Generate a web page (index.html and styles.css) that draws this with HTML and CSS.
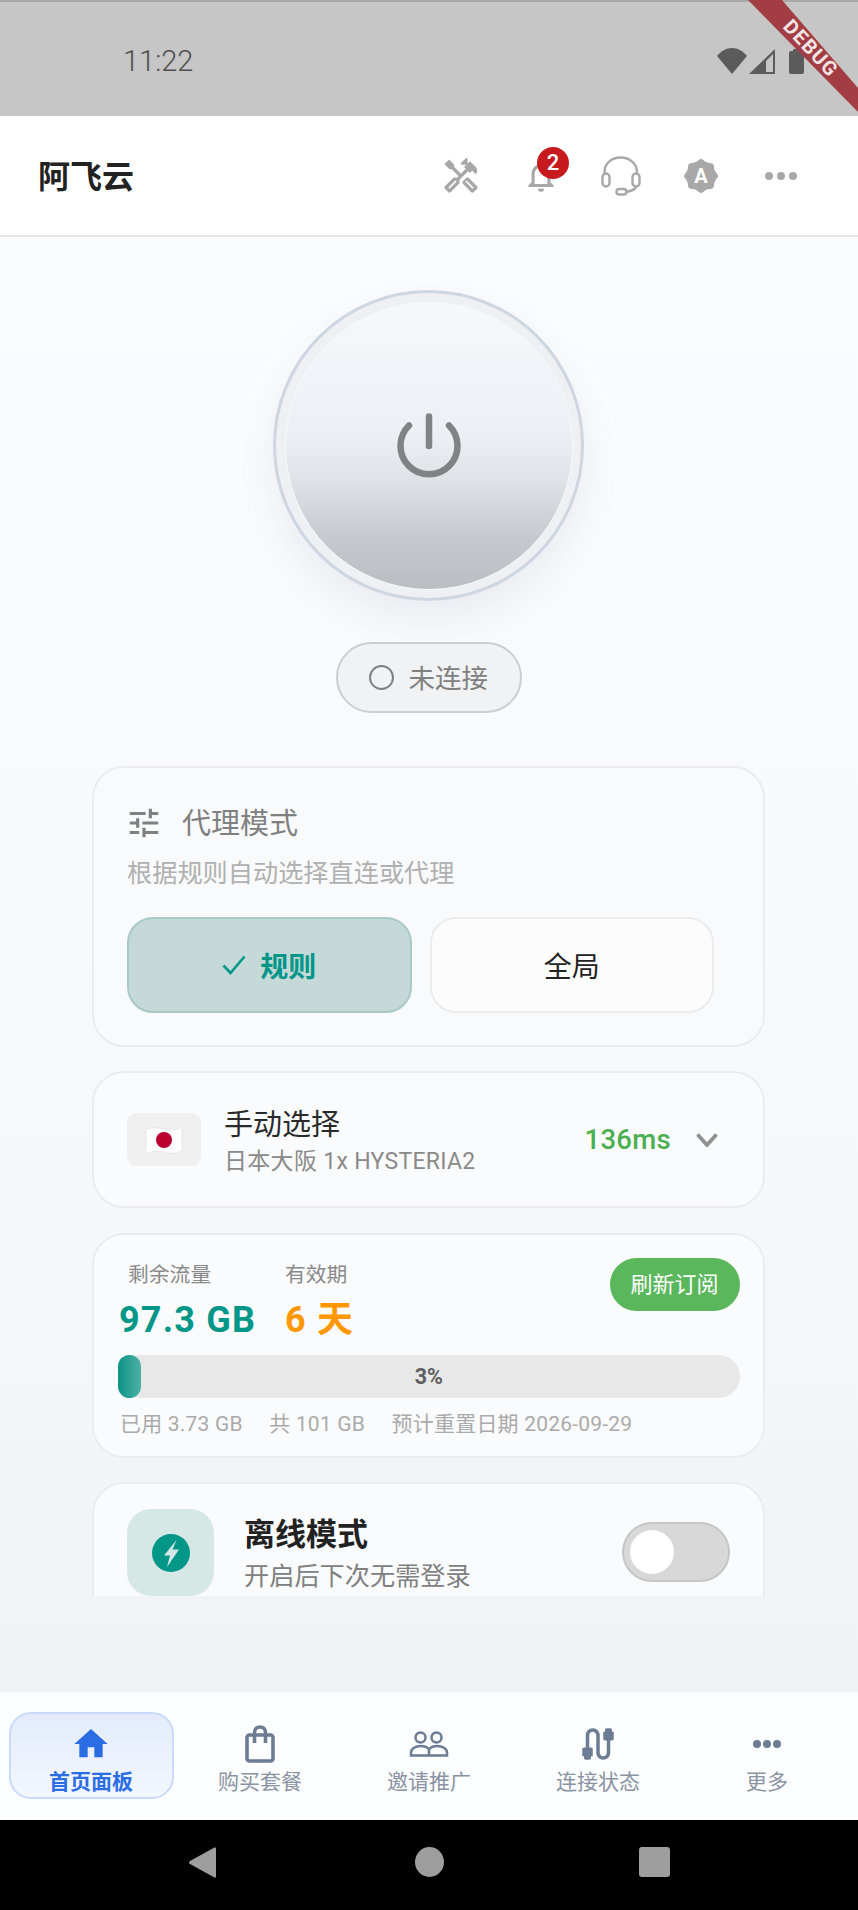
FILE: index.html

```html
<!DOCTYPE html>
<html lang="zh">
<head>
  <meta charset="UTF-8">
  <meta name="viewport" content="width=device-width, initial-scale=1.0">
  <title>阿飞云</title>
  <link rel="stylesheet" href="styles.css">
</head>
<body>
  <div class="phone">
    <div class="status-bar">
      <span class="status-time">11:22</span>
      <div class="status-icons">
        <svg class="st-wifi" viewBox="0 0 30 26"><path d="M0 8C4 3 9 0 15 0s11 3 15 8L15 26z"/></svg>
        <svg class="st-signal" viewBox="0 0 26 25"><path d="M26 0v25H0zM24 5L17 12v11h7z"/></svg>
        <svg class="st-battery" viewBox="0 0 15 25"><path d="M4 2V1q0-1 1-1h5q1 0 1 1v1h2q2 0 2 2v19q0 2-2 2H2q-2 0-2-2V4q0-2 2-2z"/></svg>
      </div>
    </div>

    <header class="app-bar">
      <h1 class="app-title">阿飞云</h1>
      <div class="app-actions">
        <div class="action">
          <svg class="ic-tools" viewBox="0 0 24 24"><path d="M21.67 18.17l-5.3-5.3h-.99l-2.54 2.54v.99l5.3 5.3c.39.39 1.02.39 1.41 0l2.12-2.12c.39-.38.39-1.02 0-1.41zm-2.83 1.42l-4.24-4.24.71-.71 4.24 4.24-.71.71z"/><path d="M17.34 10.19l1.41-1.41 2.12 2.12c1.17-1.17 1.17-3.07 0-4.24l-3.54-3.54-1.41 1.41V1.71l-.7-.71-3.54 3.54.71.71h2.83l-1.41 1.41 1.06 1.06-2.89 2.89-4.13-4.13V5.06L4.83 2.04 2 4.87 5.03 7.9h1.41l4.13 4.13-.85.85H7.6l-5.3 5.3c-.39.39-.39 1.02 0 1.41l2.12 2.12c.39.39 1.02.39 1.41 0l5.3-5.3v-2.12l5.15-5.15 1.06 1.05zm-7.98 5.15l-4.24 4.24-.71-.71 4.24-4.24.71.71z"/></svg>
        </div>
        <div class="action action-bell">
          <svg class="ic-bell" viewBox="0 0 24 24"><path d="M12 22c1.1 0 2-.9 2-2h-4c0 1.1.9 2 2 2zm6-6v-5c0-3.07-1.63-5.64-4.5-6.32V4c0-.83-.67-1.5-1.5-1.5s-1.5.67-1.5 1.5v.68C7.64 5.36 6 7.92 6 11v5l-2 2v1h16v-1l-2-2zm-2 1H8v-6c0-2.48 1.51-4.5 4-4.5s4 2.02 4 4.5v6z"/></svg>
          <span class="bell-badge">2</span>
        </div>
        <div class="action">
          <svg class="ic-headset" viewBox="0 0 40 40" fill="none" stroke="#a8a8a8" stroke-width="2.4" stroke-linecap="round"><path d="M3.5 18V16C3.500 7.500 10.500 1.500 19.500 1.500S36 7.500 36 16v2"/><rect x="1.500" y="17.500" width="7" height="13" rx="3.500"/><rect x="31.500" y="17.500" width="7" height="13" rx="3.500"/><path d="M35 31c-1 3-5 4-10 5"/><rect x="15.500" y="33" width="10" height="5.500" rx="2.750"/></svg>
        </div>
        <div class="action">
          <svg class="ic-auto" viewBox="0 0 36 36"><rect x="5" y="5" width="26" height="26" rx="4" fill="#a8a8a8"/><rect x="5" y="5" width="26" height="26" rx="4" fill="#a8a8a8" transform="rotate(45 18 18)"/><circle cx="18" cy="18" r="15" fill="#a8a8a8"/><text x="18" y="25" text-anchor="middle" class="auto-letter">A</text></svg>
        </div>
        <div class="action">
          <svg class="ic-dots" viewBox="0 0 32 8" fill="#a8a8a8"><circle cx="4" cy="4" r="4"/><circle cx="16" cy="4" r="4"/><circle cx="28" cy="4" r="4"/></svg>
        </div>
      </div>
    </header>

    <main class="main">
      <div class="scroll">
        <div class="power-wrap">
          <div class="power-outer">
            <div class="power-inner">
              <svg class="ic-power" viewBox="0 0 66 66" fill="none" stroke="#808284" stroke-width="6.500" stroke-linecap="round"><path d="M13 12.500A28.500 28.500 0 1 0 53 12.500"/><path d="M33 3.500V33"/></svg>
            </div>
          </div>
        </div>

        <div class="conn-wrap">
          <div class="conn-pill">
            <span class="conn-dot"></span>
            <span class="conn-text">未连接</span>
          </div>
        </div>

        <section class="card card-mode">
          <div class="mode-head">
            <svg class="ic-tune" viewBox="0 0 24 24"><path d="M3 17v2h6v-2H3zM3 5v2h10V5H3zm10 16v-2h8v-2h-8v-2h-2v6h2zM7 9v2H3v2h4v2h2V9H7zm14 4v-2H11v2h10zm-6-4h2V7h4V5h-4V3h-2v6z"/></svg>
            <span class="mode-title">代理模式</span>
          </div>
          <p class="mode-desc">根据规则自动选择直连或代理</p>
          <div class="mode-btns">
            <div class="mode-btn active">
              <svg class="ic-check" viewBox="0 0 24 20" fill="none" stroke="#009688" stroke-width="2.600"><path d="M1.500 10.500L8.500 18L22.500 1.500"/></svg>
              <span>规则</span>
            </div>
            <div class="mode-btn">全局</div>
          </div>
        </section>

        <section class="card card-node">
          <div class="flag-box">
            <svg class="ic-flag" viewBox="0 0 38 28"><path d="M1 3q9-3 18 0t18-2v24q-9 4-18 1t-18 2z" fill="#fff" stroke="#e2e2e2" stroke-width=".8"/><circle cx="19" cy="14" r="8" fill="#bc002d"/></svg>
          </div>
          <div class="node-info">
            <div class="node-title">手动选择</div>
            <div class="node-sub">日本大阪 1x HYSTERIA2</div>
          </div>
          <span class="node-ping">136ms</span>
          <svg class="ic-chevron" viewBox="0 0 22 14" fill="none" stroke="#909090" stroke-width="3.800"><path d="M1.500 1.500L11 12L20.500 1.500"/></svg>
        </section>

        <section class="card card-traffic">
          <div class="traffic-top">
            <div class="stat stat-left">
              <div class="stat-label">剩余流量</div>
              <div class="stat-value teal">97.3 GB</div>
            </div>
            <div class="stat">
              <div class="stat-label flush">有效期</div>
              <div class="stat-value orange">6 天</div>
            </div>
            <div class="refresh-btn">刷新订阅</div>
          </div>
          <div class="progress">
            <div class="progress-fill" style="width: 23px"></div>
            <span class="progress-text">3%</span>
          </div>
          <div class="traffic-foot">
            <span>已用 3.73 GB</span>
            <span>共 101 GB</span>
            <span>预计重置日期 2026-09-29</span>
          </div>
        </section>

        <section class="card card-offline">
          <div class="offline-icon">
            <svg class="ic-bolt" viewBox="0 0 38 38"><circle cx="19" cy="19" r="19" fill="#009688"/><path d="M24.500 6L12 21.500H18L15 33L27 15.500H20.500z" fill="#d6e8e6"/></svg>
          </div>
          <div class="offline-info">
            <div class="offline-title">离线模式</div>
            <div class="offline-sub">开启后下次无需登录</div>
          </div>
          <div class="switch"><span class="switch-knob"></span></div>
        </section>
      </div>
    </main>

    <nav class="bottom-nav">
      <div class="tab active">
        <div class="tab-icon"><svg class="ic-home" viewBox="0 0 24 24"><path d="M10 20v-6h4v6h5v-8h3L12 3 2 12h3v8z"/></svg></div>
        <span class="tab-label">首页面板</span>
      </div>
      <div class="tab">
        <div class="tab-icon"><svg class="ic-bag" viewBox="0 0 32 38" fill="none" stroke="#6b7c93" stroke-width="3.600"><rect x="3" y="10" width="26" height="26" rx="2.500"/><path d="M10.500 18V7.500C10.500 4 13 2 16 2s5.500 2 5.500 5.500V18"/></svg></div>
        <span class="tab-label">购买套餐</span>
      </div>
      <div class="tab">
        <div class="tab-icon"><svg class="ic-people" viewBox="0 0 40 26" fill="none" stroke="#6b7c93" stroke-width="2.500"><circle cx="11.500" cy="6.500" r="5"/><circle cx="27.500" cy="6.500" r="5"/><path d="M2 24.500v-3c0-4 5-6.500 9.500-6.500 3.500 0 6.500 1 8.500 3 2-2 5-3 8.500-3 4.500 0 9.500 2.500 9.500 6.500v3z"/><path d="M20 18v6"/></svg></div>
        <span class="tab-label">邀请推广</span>
      </div>
      <div class="tab">
        <div class="tab-icon"><svg class="ic-cable" viewBox="0 0 24 24"><path d="M20 5V4c0-.55-.45-1-1-1h-2c-.55 0-1 .45-1 1v1h-1v4c0 .55.45 1 1 1h1v7c0 1.100-.9 2-2 2s-2-.9-2-2V7c0-2.210-1.790-4-4-4S5 4.790 5 7v7H4c-.55 0-1 .45-1 1v4h1v1c0 .55.45 1 1 1h2c.55 0 1-.45 1-1v-1h1v-4c0-.55-.45-1-1-1H7V7c0-1.100.9-2 2-2s2 .9 2 2v10c0 2.210 1.790 4 4 4s4-1.790 4-4v-7h1c.55 0 1-.45 1-1V5h-1z"/></svg></div>
        <span class="tab-label">连接状态</span>
      </div>
      <div class="tab">
        <div class="tab-icon"><svg class="ic-more" viewBox="0 0 28 8" fill="#6b7c93"><circle cx="4" cy="4" r="4"/><circle cx="14" cy="4" r="4"/><circle cx="24" cy="4" r="4"/></svg></div>
        <span class="tab-label">更多</span>
      </div>
    </nav>

    <div class="sys-nav">
      <svg class="sys-back" viewBox="0 0 27 31"><path d="M27 1.500v28q0 1.500-1.500 1L1 17q-2-1.500 0-3L25.500.5q1.500-.5 1.500 1z"/></svg>
      <span class="sys-home"></span>
      <span class="sys-recent"></span>
    </div>

    <div class="debug-banner"><span class="debug-text">DEBUG</span></div>
  </div>
</body>
</html>
```

FILE: styles.css

```css
* {
  box-sizing: border-box;
}
html, body {
  margin: 0;
  padding: 0;
}
body {
  width: 858px;
  height: 1910px;
  overflow: hidden;
  font-family: Roboto, "Noto Sans CJK SC", sans-serif;
  color: #222;
}
svg {
  display: block;
  flex: none;
}
.phone {
  position: relative;
  display: flex;
  flex-direction: column;
  width: 858px;
  height: 1910px;
  overflow: hidden;
}

/* status bar */
.status-bar {
  display: flex;
  align-items: center;
  justify-content: space-between;
  height: 116px;
  padding: 4px 54px 0 123px;
  background-color: #c6c6c6;
  border-top: 2px solid #a8a8a8;
}
.status-time {
  font-size: 29px;
  font-weight: 300;
  color: #4f4f4f;
}
.status-icons {
  display: flex;
  align-items: center;
  fill: #5b5b5b;
}
.st-wifi {
  width: 30px;
  height: 26px;
}
.st-signal {
  width: 26px;
  height: 25px;
  margin-left: 2px;
}
.st-battery {
  width: 15px;
  height: 25px;
  margin-left: 14px;
}

/* app bar */
.app-bar {
  display: flex;
  align-items: center;
  justify-content: space-between;
  height: 121px;
  padding: 0 37px 0 38px;
  background-color: #fff;
  border-bottom: 2px solid #e6e6e6;
}
.app-title {
  margin: 3px 0 0;
  font-size: 32px;
  font-weight: 700;
  line-height: 40px;
  color: #222;
}
.app-actions {
  display: flex;
  align-items: center;
}
.action {
  position: relative;
  display: flex;
  justify-content: center;
  width: 80px;
  fill: #a8a8a8;
}
.ic-tools {
  width: 40px;
  height: 40px;
}
.ic-bell {
  width: 38px;
  height: 38px;
}
.bell-badge {
  position: absolute;
  top: -10px;
  left: 36px;
  width: 32px;
  height: 32px;
  border-radius: 50%;
  background-color: #c61a1f;
  color: #fff;
  font-size: 22px;
  font-weight: 500;
  line-height: 32px;
  text-align: center;
}
.ic-headset {
  width: 40px;
  height: 40px;
}
.ic-auto {
  width: 36px;
  height: 36px;
}
.auto-letter {
  font-family: Roboto, sans-serif;
  font-size: 20px;
  font-weight: 700;
  fill: #fff;
}
.ic-dots {
  width: 32px;
  height: 8px;
}

/* main area */
.main {
  flex: 1;
  background: linear-gradient(180deg, #fbfcfe 0%, #f6f8fb 60%, #f0f3f6 100%);
}
.scroll {
  height: 1359px;
  padding: 53px 93px 0 92px;
  overflow: hidden;
}
.power-wrap {
  display: flex;
  justify-content: center;
}
.power-outer {
  display: flex;
  align-items: center;
  justify-content: center;
  width: 311px;
  height: 311px;
  border: 3px solid #cdd6e2;
  border-radius: 50%;
  background-color: #eef0f3;
  box-shadow: 0 18px 40px rgba(60, 70, 90, 0.08);
}
.power-inner {
  display: flex;
  align-items: center;
  justify-content: center;
  width: 288px;
  height: 288px;
  border: 1.500px solid #f8f9fb;
  border-radius: 50%;
  background: linear-gradient(180deg, #f6f8fa 0%, #ecf0f5 46%, #dfe3e8 62%, #c6cacf 82%, #babec3 100%);
}
.ic-power {
  width: 66px;
  height: 66px;
}
.conn-wrap {
  display: flex;
  justify-content: center;
  margin-top: 41px;
}
.conn-pill {
  display: flex;
  align-items: center;
  width: 186px;
  height: 71px;
  padding-left: 31px;
  border: 2px solid #cdcdcd;
  border-radius: 36px;
  background-color: #f1f2f4;
}
.conn-dot {
  width: 25px;
  height: 25px;
  border: 2.500px solid #808080;
  border-radius: 50%;
}
.conn-text {
  margin: 3px 0 0 15px;
  font-size: 26.500px;
  line-height: 36px;
  color: #808080;
}

/* cards */
.card {
  border: 2px solid #ececee;
  border-radius: 32px;
  background-color: #fafbfc;
}
.card-mode {
  margin-top: 53px;
  padding: 37px 49px 32px 33px;
  background-color: #f9fafc;
}
.mode-head {
  display: flex;
  align-items: center;
  height: 36px;
}
.ic-tune {
  width: 38px;
  height: 38px;
  margin-left: -2px;
  fill: #808080;
}
.mode-title {
  margin: 2px 0 0 19px;
  font-size: 29px;
  line-height: 36px;
  color: #808080;
}
.mode-desc {
  margin: 17px 0 0;
  font-size: 25.200px;
  line-height: 32px;
  white-space: nowrap;
  color: #b0b0b0;
}
.mode-btns {
  display: flex;
  gap: 18px;
  margin-top: 27px;
}
.mode-btn {
  display: flex;
  flex: 1;
  align-items: center;
  justify-content: center;
  height: 96px;
  border: 2px solid #ececec;
  border-radius: 26px;
  background-color: #fcfcfc;
  font-size: 28px;
  color: #222;
}
.mode-btn.active {
  gap: 14px;
  border-color: #a9c9c6;
  background-color: #c6d9d9;
  font-weight: 700;
  color: #009688;
}
.ic-check {
  width: 24px;
  height: 20px;
}
.card-node {
  display: flex;
  align-items: center;
  height: 137px;
  margin-top: 24px;
  padding: 0 45px 0 33px;
}
.flag-box {
  display: flex;
  align-items: center;
  justify-content: center;
  width: 73.500px;
  height: 53px;
  border-radius: 9px;
  background-color: #f0f0f0;
}
.ic-flag {
  width: 38px;
  height: 28px;
}
.node-info {
  flex: 1;
  margin-left: 23.500px;
  padding-top: 4px;
}
.node-title {
  font-size: 29px;
  line-height: 36px;
  color: #2a2a2a;
}
.node-sub {
  margin-top: 4px;
  font-size: 23px;
  line-height: 30px;
  letter-spacing: 0.3px;
  color: #8a8a8a;
}
.node-ping {
  font-size: 27.500px;
  font-weight: 500;
  letter-spacing: 0.3px;
  color: #4caf50;
}
.ic-chevron {
  width: 22px;
  height: 14px;
  margin-left: 25px;
}
.card-traffic {
  margin-top: 25px;
  padding: 26px 23.500px 18px 25px;
}
.traffic-top {
  display: flex;
  align-items: flex-start;
}
.stat {
  flex: 1;
}
.stat-left {
  flex: none;
  width: 166px;
}
.stat-label {
  padding-left: 9px;
  font-size: 20.800px;
  line-height: 28px;
  color: #8a8a8a;
}
.stat-label.flush {
  padding-left: 0;
}
.stat-value {
  margin-top: 7px;
  font-size: 36px;
  font-weight: 700;
  line-height: 48px;
  letter-spacing: 1.200px;
  white-space: nowrap;
}
.teal {
  color: #009688;
}
.orange {
  color: #ff9800;
}
.refresh-btn {
  width: 130px;
  height: 53px;
  margin-top: -3px;
  border-radius: 27px;
  background-color: #5ab75c;
  color: #fff;
  font-size: 22px;
  line-height: 53px;
  text-align: center;
}
.progress {
  position: relative;
  height: 43px;
  margin: 11px 0 0 -1px;
  border-radius: 22px;
  background-color: #e8e8e8;
}
.progress-fill {
  height: 43px;
  border-radius: 12px;
  background: linear-gradient(90deg, #0c9485, #4fb0a6);
}
.progress-text {
  position: absolute;
  inset: 0;
  font-size: 21.500px;
  font-weight: 700;
  line-height: 43px;
  text-align: center;
  color: #5f5f5f;
}
.traffic-foot {
  display: flex;
  gap: 26.500px;
  margin: 12px 0 0 1px;
  font-size: 21px;
  line-height: 28px;
  letter-spacing: 0.2px;
  color: #aaa;
}
.card-offline {
  display: flex;
  align-items: flex-start;
  margin-top: 24px;
  padding: 25px 33px 30px 33px;
  background-color: #f9fbfc;
}
.offline-icon {
  display: flex;
  flex: none;
  align-items: center;
  justify-content: center;
  width: 87px;
  height: 87px;
  border-radius: 24px;
  background-color: #d6e8e6;
}
.ic-bolt {
  width: 38px;
  height: 38px;
}
.offline-info {
  flex: 1;
  margin: 6px 0 0 30px;
}
.offline-title {
  font-size: 31px;
  font-weight: 700;
  line-height: 40px;
  color: #222;
}
.offline-sub {
  margin-top: 5px;
  font-size: 25.200px;
  line-height: 34px;
  color: #808080;
}
.switch {
  display: flex;
  align-items: center;
  width: 108px;
  height: 60px;
  margin-top: 13px;
  padding-left: 6px;
  border: 2.500px solid #c6c6c6;
  border-radius: 30px;
  background-color: #d8d8d8;
}
.switch-knob {
  width: 44px;
  height: 44px;
  border-radius: 50%;
  background-color: #fff;
}

/* bottom nav */
.bottom-nav {
  display: grid;
  grid-template-columns: repeat(5, 1fr);
  height: 128px;
  padding: 20px 6.500px 21px;
  background-color: #fcfdfe;
}
.tab {
  display: flex;
  flex-direction: column;
  align-items: center;
  margin: 0 2px;
  padding-top: 9px;
  border: 2px solid transparent;
  border-radius: 22px;
}
.tab.active {
  border-color: #c9dafa;
  background: linear-gradient(180deg, #e3ebfb 0%, #f3f7fe 100%);
}
.tab-icon {
  display: flex;
  align-items: center;
  justify-content: center;
  height: 42px;
}
.tab-label {
  margin-top: 3px;
  font-size: 21px;
  line-height: 28px;
  color: #8a93a3;
}
.tab.active .tab-label {
  font-weight: 700;
  color: #2b6de5;
}
.ic-home {
  width: 40px;
  height: 40px;
  fill: #2b6de5;
}
.ic-bag {
  width: 32px;
  height: 38px;
}
.ic-people {
  width: 40px;
  height: 26px;
}
.ic-cable {
  width: 42px;
  height: 42px;
  fill: #6b7c93;
}
.ic-more {
  width: 28px;
  height: 8px;
}

/* android nav */
.sys-nav {
  display: flex;
  align-items: center;
  justify-content: space-between;
  height: 90px;
  padding: 0 188px 6px 189px;
  background-color: #000;
}
.sys-back {
  width: 27px;
  height: 31px;
  fill: #9e9e9e;
}
.sys-home {
  width: 29px;
  height: 30px;
  margin-left: 3px;
  border-radius: 50%;
  background-color: #9e9e9e;
}
.sys-recent {
  width: 31px;
  height: 30px;
  border-radius: 3px;
  background-color: #9e9e9e;
}

/* debug ribbon */
.debug-banner {
  position: absolute;
  top: 0;
  right: 0;
  width: 110px;
  height: 112px;
  overflow: hidden;
  background-color: #a23d44;
  clip-path: polygon(0 0, 34px 0, 110px 88px, 110px 112px);
}
.debug-text {
  position: absolute;
  top: 36px;
  left: 23px;
  width: 80px;
  font-size: 20px;
  font-weight: 700;
  line-height: 24px;
  letter-spacing: 1.200px;
  text-align: center;
  color: #f3e4e4;
  transform: rotate(47deg);
}
```
